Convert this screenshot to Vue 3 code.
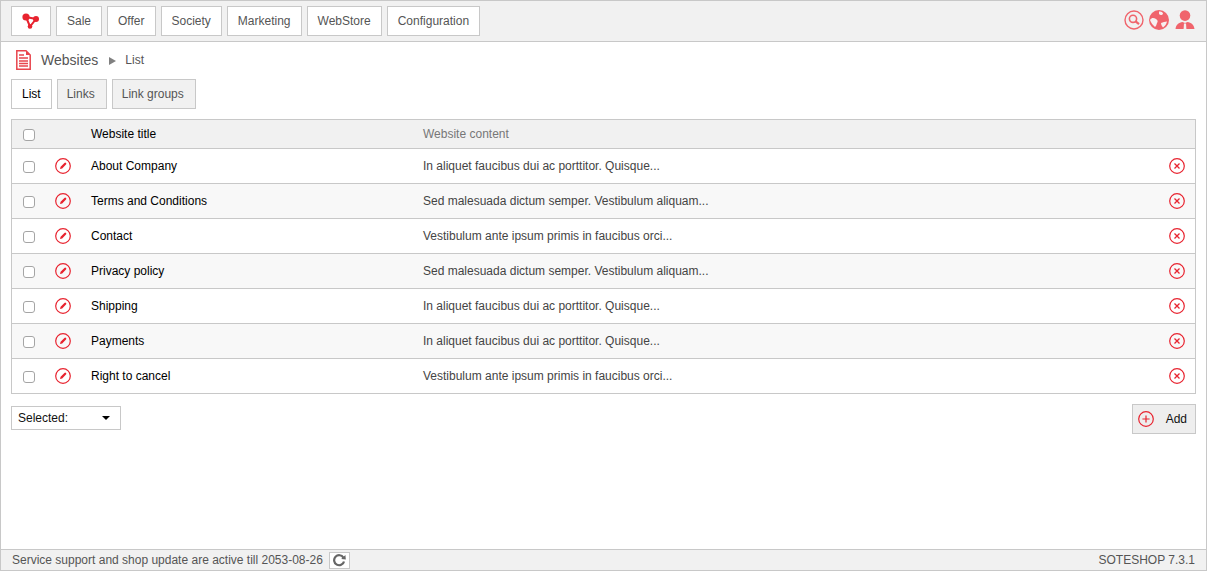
<script setup>
const menu = ['Sale', 'Offer', 'Society', 'Marketing', 'WebStore', 'Configuration']
const tabs = ['List', 'Links', 'Link groups']
const rows = [
  ['About Company', 'In aliquet faucibus dui ac porttitor. Quisque...'],
  ['Terms and Conditions', 'Sed malesuada dictum semper. Vestibulum aliquam...'],
  ['Contact', 'Vestibulum ante ipsum primis in faucibus orci...'],
  ['Privacy policy', 'Sed malesuada dictum semper. Vestibulum aliquam...'],
  ['Shipping', 'In aliquet faucibus dui ac porttitor. Quisque...'],
  ['Payments', 'In aliquet faucibus dui ac porttitor. Quisque...'],
  ['Right to cancel', 'Vestibulum ante ipsum primis in faucibus orci...']
]
</script>

<template>
  <div class="page">
    <header class="topbar">
      <nav class="menu">
        <a class="btn logo">
          <svg width="20" height="17" viewBox="0 0 20 17">
            <path d="M5 4 L15 6 L9 13.5 Z" fill="none" stroke="#e8232f" stroke-width="2" />
            <circle cx="5" cy="4" r="3.6" fill="#e8232f" />
            <circle cx="15" cy="6" r="3" fill="#e8232f" />
            <circle cx="9" cy="13.5" r="2.3" fill="#e8232f" />
          </svg>
        </a>
        <a v-for="m in menu" :key="m" class="btn">{{ m }}</a>
      </nav>
      <div class="tools">
        <svg width="20" height="20" viewBox="0 0 20 20" fill="none" stroke="#f0646c">
          <circle cx="10" cy="10" r="9" stroke-width="1.4" />
          <circle cx="9" cy="8.8" r="3.6" stroke-width="1.6" />
          <path d="M11.6 11.4 L15 14.2" stroke-width="2.2" />
        </svg>
        <svg width="20" height="20" viewBox="0 0 20 20">
          <circle cx="10" cy="10" r="10" fill="#f0646c" />
          <path d="M1 10 C3 7 5 8 7 9 C9 10 9 12 8 13 C7.5 15 7 16 6 17 C4 15 2 13 1 10 Z M12 13 C14 12 16 12 18 11.5 C17.5 14 16 16 14 17.5 C13 16 12 15 12 13 Z M10 1.5 C13 1.5 15 3 13.5 4.5 C12 5.5 11 5 10 4 Z" fill="#f7f0f0" />
        </svg>
        <svg class="user" width="20" height="20" viewBox="0 0 20 20">
          <circle cx="10" cy="5.6" r="5.3" fill="#f0646c" />
          <path d="M0.5 19 C1 14.5 4 12.5 7.5 12 L10 13 L12.5 12 C16 12.5 19 14.5 19.5 19 Z" fill="#f0646c" />
          <path d="M9 13.5 H11 L11.4 19 H8.6 Z" fill="#f4eeee" />
        </svg>
      </div>
    </header>

    <main class="content">
      <div class="crumbs">
        <svg width="15" height="20" viewBox="0 0 15 20">
          <path d="M0.8 0.8 H10 L14.2 5 V19.2 H0.8 Z" fill="#fff" stroke="#e8454d" stroke-width="1.5" />
          <path d="M10 0.8 V5 H14.2 Z" fill="#e8454d" />
          <path d="M3 5 H8 M3 8 H12 M3 11 H12 M3 13.5 H12 M3 16 H12" stroke="#e8454d" stroke-width="1.5" />
        </svg>
        <span class="crumb-title">Websites</span>
        <span class="crumb-arrow"></span>
        <span class="crumb-sub">List</span>
      </div>

      <div class="tabs">
        <a v-for="(t, i) in tabs" :key="t" class="tab" :class="{ active: i === 0 }">{{ t }}</a>
      </div>

      <div class="table">
        <div class="row head">
          <span class="c-check"><input type="checkbox" class="box" /></span>
          <span class="c-edit"></span>
          <span class="c-title">Website title</span>
          <span class="c-text muted">Website content</span>
          <span class="c-del"></span>
        </div>
        <div v-for="(r, i) in rows" :key="r[0]" class="row" :class="{ odd: i % 2 === 1 }">
          <span class="c-check"><input type="checkbox" class="box" /></span>
          <span class="c-edit">
            <svg width="16" height="16" viewBox="0 0 16 16" fill="none">
              <circle cx="8" cy="8" r="7.3" stroke="#e8232f" stroke-width="1.2" />
              <path d="M5 11 L5.6 8.8 L9.4 5 A1 1 0 0 1 11 6.6 L7.2 10.4 Z" fill="#e8232f" />
            </svg>
          </span>
          <span class="c-title">{{ r[0] }}</span>
          <span class="c-text">{{ r[1] }}</span>
          <span class="c-del">
            <svg width="16" height="16" viewBox="0 0 16 16" fill="none" stroke="#e8232f">
              <circle cx="8" cy="8" r="7.3" stroke-width="1.2" />
              <path d="M5.5 5.5 L10.5 10.5 M10.5 5.5 L5.5 10.5" stroke-width="1.3" />
            </svg>
          </span>
        </div>
      </div>

      <div class="actions">
        <div class="select">
          <span>Selected:</span>
          <i class="caret"></i>
        </div>
        <a class="add">
          <svg width="16" height="16" viewBox="0 0 16 16" fill="none" stroke="#e8232f">
            <circle cx="8" cy="8" r="7.3" stroke-width="1.2" />
            <path d="M8 4.4 V11.6 M4.4 8 H11.6" stroke-width="1.2" />
          </svg>
          <span>Add</span>
        </a>
      </div>
    </main>

    <footer class="footer">
      <div class="support">
        <span>Service support and shop update are active till 2053-08-26</span>
        <a class="refresh">
          <svg width="14" height="14" viewBox="0 0 14 14" fill="none" stroke="#666" stroke-width="2.2">
            <path d="M11.4 4.6 A5 5 0 1 0 12 8.4" />
            <path d="M9.2 6 L13.8 6.6 L13.4 2 Z" fill="#666" stroke="none" />
          </svg>
        </a>
      </div>
      <span>SOTESHOP 7.3.1</span>
    </footer>
  </div>
</template>

<style>
html, body { margin: 0; background: #fff; }
</style>

<style scoped>
.page {
  box-sizing: border-box;
  width: 1207px;
  height: 571px;
  display: flex;
  flex-direction: column;
  border: 1px solid #c8c8c8;
  border-top-width: 0;
  font-family: "Liberation Sans", Arial, sans-serif;
  font-size: 12px;
  color: #555;
}
.topbar {
  box-sizing: border-box;
  height: 42px;
  flex: none;
  display: flex;
  align-items: flex-start;
  justify-content: space-between;
  padding: 5px 11px 0 10px;
  background: #f1f1f1;
  border-top: 1px solid #c8c8c8;
  border-bottom: 1px solid #c8c8c8;
}
.menu { display: flex; gap: 5px; }
.btn {
  box-sizing: border-box;
  height: 30px;
  padding: 0 10px;
  display: flex;
  align-items: center;
  background: #fff;
  border: 1px solid #c8c8c8;
}
.logo { width: 40px; padding: 0; justify-content: center; }
.tools { display: flex; gap: 5px; padding-top: 4px; }
.user { margin-left: 1px; }
.content { flex: 1; padding: 0 10px; }
.crumbs { height: 37px; display: flex; align-items: center; padding: 0 0 1px 5px; box-sizing: border-box; }
.crumb-title { font-size: 14px; margin-left: 10px; }
.crumb-arrow {
  width: 0; height: 0;
  margin: 2px 9px 0 11px;
  border-left: 7px solid #808080;
  border-top: 4px solid transparent;
  border-bottom: 4px solid transparent;
}
.tabs { display: flex; gap: 5px; }
.tab {
  box-sizing: border-box;
  height: 30px;
  padding: 0 11px 0 9px;
  display: flex;
  align-items: center;
  background: #f1f1f1;
  border: 1px solid #c8c8c8;
}
.tab.active { background: #fff; color: #000; padding: 0 10px; }
.table { margin-top: 10px; border: 1px solid #c8c8c8; border-bottom: 0; }
.row {
  box-sizing: border-box;
  height: 35px;
  display: flex;
  align-items: center;
  background: #fff;
  color: #000;
  border-bottom: 1px solid #c8c8c8;
}
.row.odd { background: #f8f8f8; }
.row.head { height: 29px; background: #f1f1f1; }
.muted { color: #777; }
.c-check { width: 36px; flex: none; display: flex; padding: 2px 0 0 11px; box-sizing: border-box; }
.c-edit { width: 43px; flex: none; display: flex; padding-left: 7px; box-sizing: border-box; }
.c-title { width: 332px; flex: none; }
.c-text { flex: 1; color: #444; }
.c-text.muted { color: #777; }
.c-del { width: 26px; flex: none; display: flex; }
.box {
  appearance: none;
  box-sizing: border-box;
  width: 12px;
  height: 12px;
  margin: 0;
  background: #fff;
  border: 1px solid #a5a5a5;
  border-radius: 3px;
}
.actions { display: flex; justify-content: space-between; align-items: flex-start; margin-top: 10px; }
.select {
  box-sizing: border-box;
  width: 110px;
  height: 24px;
  margin-top: 2px;
  padding: 0 10px 0 6px;
  display: flex;
  align-items: center;
  justify-content: space-between;
  background: #fff;
  color: #111;
  border: 1px solid #c8c8c8;
}
.caret {
  width: 0; height: 0;
  border-top: 4px solid #000;
  border-left: 4px solid transparent;
  border-right: 4px solid transparent;
}
.add {
  box-sizing: border-box;
  width: 64px;
  height: 30px;
  padding: 0 8px 0 5px;
  display: flex;
  align-items: center;
  justify-content: space-between;
  background: #eee;
  color: #111;
  border: 1px solid #c8c8c8;
}
.footer {
  box-sizing: border-box;
  height: 21px;
  flex: none;
  display: flex;
  align-items: center;
  justify-content: space-between;
  padding: 0 11px;
  background: #f1f1f1;
  border-top: 1px solid #c8c8c8;
}
.support { display: flex; align-items: center; gap: 6px; }
.refresh {
  box-sizing: border-box;
  width: 21px;
  height: 17px;
  display: flex;
  align-items: center;
  justify-content: center;
  background: #fff;
  border: 1px solid #c8c8c8;
}
</style>
